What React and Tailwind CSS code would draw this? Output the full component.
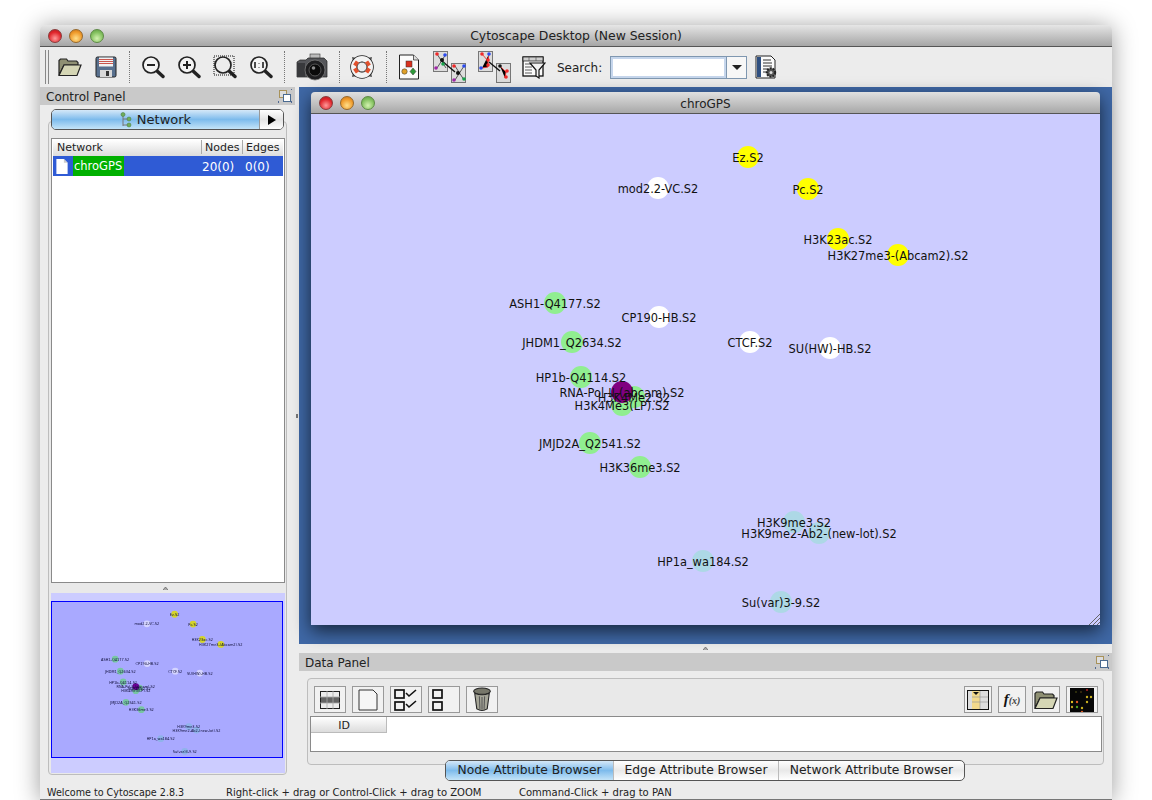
import React from 'react';

const nodes = [
  { x: 748, y: 157, c: 'bg-[#ffff00]', t: 'Ez.S2' },
  { x: 658, y: 188, c: 'bg-white', t: 'mod2.2-VC.S2' },
  { x: 808, y: 189, c: 'bg-[#ffff00]', t: 'Pc.S2' },
  { x: 838, y: 239, c: 'bg-[#ffff00]', t: 'H3K23ac.S2' },
  { x: 898, y: 255, c: 'bg-[#ffff00]', t: 'H3K27me3-(Abcam2).S2' },
  { x: 555, y: 303, c: 'bg-[#90ee90]', t: 'ASH1-Q4177.S2' },
  { x: 659, y: 317, c: 'bg-white', t: 'CP190-HB.S2' },
  { x: 572, y: 342, c: 'bg-[#90ee90]', t: 'JHDM1_Q2634.S2' },
  { x: 750, y: 342, c: 'bg-white', t: 'CTCF.S2' },
  { x: 830, y: 348, c: 'bg-white', t: 'SU(HW)-HB.S2' },
  { x: 581, y: 377, c: 'bg-[#90ee90]', t: 'HP1b-Q4114.S2' },
  { x: 634, y: 397, c: 'bg-[#90ee90]', t: 'H3K4Me2.S2' },
  { x: 622, y: 405, c: 'bg-[#90ee90]', t: 'H3K4Me3(LP).S2' },
  { x: 622, y: 392, c: 'bg-[#800080]', t: 'RNA-Pol-II-(abcam).S2' },
  { x: 590, y: 443, c: 'bg-[#90ee90]', t: 'JMJD2A_Q2541.S2' },
  { x: 640, y: 467, c: 'bg-[#90ee90]', t: 'H3K36me3.S2' },
  { x: 794, y: 522, c: 'bg-[#add8e6]', t: 'H3K9me3.S2' },
  { x: 819, y: 533, c: 'bg-[#add8e6]', t: 'H3K9me2-Ab2-(new-lot).S2' },
  { x: 703, y: 561, c: 'bg-[#add8e6]', t: 'HP1a_wa184.S2' },
  { x: 781, y: 602, c: 'bg-[#add8e6]', t: 'Su(var)3-9.S2' },
];

const Graph = () => (
  <div className="relative w-[789px] h-[511px]">
    {nodes.map((n) => (
      <div
        key={n.t}
        className={`absolute w-[22px] h-[22px] rounded-full -translate-x-1/2 -translate-y-1/2 ${n.c}`}
        style={{ left: n.x - 311, top: n.y - 114 }}
      />
    ))}
    {nodes.map((n) => (
      <div
        key={n.t + 'l'}
        className="absolute -translate-x-1/2 -translate-y-1/2 whitespace-nowrap text-[11.4px] leading-none text-[#111]"
        style={{ left: n.x - 311, top: n.y - 112 }}
      >
        {n.t}
      </div>
    ))}
  </div>
);

const Lights = () => (
  <div className="flex gap-[7px]">
    <div className="w-[14px] h-[14px] rounded-full border border-[#8a3a3a] bg-[radial-gradient(circle_at_50%_70%,#ff9a9a,#e0252b_60%,#b01a20)]" />
    <div className="w-[14px] h-[14px] rounded-full border border-[#96682a] bg-[radial-gradient(circle_at_50%_70%,#ffdf8a,#ef9a2a_60%,#c4701a)]" />
    <div className="w-[14px] h-[14px] rounded-full border border-[#5d8a45] bg-[radial-gradient(circle_at_50%_70%,#d3f2b0,#82c05e_60%,#5d9a40)]" />
  </div>
);

const Sep = ({ ml }) => <div className={`h-[32px] border-l border-dotted border-[#777] ${ml}`} />;

const Folder = ({ className }) => (
  <svg viewBox="0 0 24 20" className={className}>
    <path d="M1 18V3.5L2.5 2h6L10 4h8.5L20 5.5V8H6L1 18z" fill="#8f9073" stroke="#222" strokeWidth="1.2" />
    <path d="M1 18.5L6 8h17l-4 10.5z" fill="#d5d6b5" stroke="#222" strokeWidth="1.2" />
  </svg>
);

const Save = () => (
  <svg viewBox="0 0 22 22" className="w-[22px] h-[22px]">
    <rect x="1" y="1" width="20" height="20" rx="1.5" fill="#58708e" stroke="#222" />
    <rect x="4" y="1.5" width="14" height="9" fill="#f2f2f2" />
    <path d="M4 3.5h14M4 5.5h14M4 7.5h14" stroke="#c9564d" strokeWidth="1" />
    <rect x="5" y="14" width="12" height="7" fill="#d8d8d8" />
    <rect x="11" y="15" width="3" height="5" fill="#333" />
  </svg>
);

const Lens = ({ children, dotted }) => (
  <svg viewBox="0 0 24 24" className="w-[24px] h-[24px]">
    <path d="M15.5 15.5L22 21.5" stroke="#222" strokeWidth="3.4" strokeLinecap="round" />
    <circle cx="10" cy="10" r="8" fill={dotted ? '#ececec' : '#f4f4f4'} stroke="#222" strokeWidth="1.7" />
    {dotted && <rect x="1" y="1" width="20" height="19" fill="none" stroke="#111" strokeWidth="1" strokeDasharray="1 1" />}
    {children}
  </svg>
);

const Camera = () => (
  <svg viewBox="0 0 32 28" className="w-[32px] h-[28px]">
    <rect x="14" y="1" width="10" height="5" fill="#bbb" stroke="#333" strokeWidth=".6" />
    <path d="M1 9l3-2h6l2-2h16l3 3v16H1z" fill="#55565a" stroke="#222" strokeWidth=".7" />
    <rect x="1" y="10" width="8" height="14" fill="#38393c" />
    <circle cx="19" cy="17" r="10" fill="#1e1e20" stroke="#777" strokeWidth=".8" />
    <circle cx="19" cy="17" r="6" fill="#0a0a0a" stroke="#555" />
    <circle cx="17.5" cy="15" r="1.8" fill="#8b8b8b" />
  </svg>
);

const Life = () => (
  <svg viewBox="0 0 24 24" className="w-[24px] h-[24px]">
    <path d="M2 2l5 1-4 4zM22 2l-5 1 4 4zM2 22l1-5 4 4zM22 22l-1-5-4 4z" fill="#555" />
    <circle cx="12" cy="12" r="8.3" fill="none" stroke="#222" strokeWidth="7" />
    <circle cx="12" cy="12" r="8.3" fill="none" stroke="#f3f3f3" strokeWidth="5.4" />
    <path d="M4.5 7.5l3.8 2.6M19.5 7.5l-3.8 2.6M4.5 16.5l3.8-2.6M19.5 16.5l-3.8-2.6" stroke="#e2502c" strokeWidth="4.8" />
    <circle cx="12" cy="12" r="4.8" fill="#ececec" stroke="#333" strokeWidth=".7" />
  </svg>
);

const DocShapes = () => (
  <svg viewBox="0 0 22 26" className="w-[22px] h-[26px]">
    <path d="M1.5 1h14l5 5v19h-19z" fill="#fbfbfb" stroke="#222" />
    <path d="M15.5 1v5h5" fill="#ddd" stroke="#222" strokeWidth=".7" />
    <rect x="8" y="7" width="6" height="6" fill="#d9321f" stroke="#333" strokeWidth=".5" />
    <circle cx="6.5" cy="17.5" r="2.7" fill="#dfa028" stroke="#333" strokeWidth=".5" />
    <path d="M15 14l3 3.5-3 3.5-3-3.5z" fill="#2f9a3a" stroke="#333" strokeWidth=".5" />
  </svg>
);

const LayoutA = () => (
  <svg viewBox="0 0 34 32" className="w-[34px] h-[32px]">
    <rect x=".5" y=".5" width="14" height="20" fill="#ddd" stroke="#777" />
    <rect x="18.5" y="12.5" width="14" height="19" fill="#ddd" stroke="#777" />
    <path d="M4 3l9 14M13 3L4 17M22 15l9 14M31 15l-9 14" stroke="#333" strokeWidth=".8" />
    <path d="M9 10l13 11" stroke="#111" strokeWidth="1.4" />
    <circle cx="4" cy="3" r="1.8" fill="#f02a2a" />
    <circle cx="12" cy="4" r="1.8" fill="#2a4af0" />
    <circle cx="10" cy="13" r="1.8" fill="#16a34a" />
    <circle cx="3" cy="17" r="1.8" fill="#a028a8" />
    <circle cx="9" cy="9" r="2" fill="#111" />
    <circle cx="21" cy="15" r="1.8" fill="#f02a2a" />
    <circle cx="31" cy="15" r="1.8" fill="#2a4af0" />
    <circle cx="25" cy="22" r="2" fill="#111" />
    <circle cx="21" cy="29" r="1.8" fill="#a028a8" />
    <circle cx="31" cy="28" r="1.8" fill="#16a34a" />
  </svg>
);

const LayoutB = () => (
  <svg viewBox="0 0 34 32" className="w-[34px] h-[32px]">
    <rect x=".5" y=".5" width="14" height="20" fill="#ddd" stroke="#777" />
    <rect x="18.5" y="12.5" width="14" height="19" fill="#ddd" stroke="#777" />
    <path d="M4 3l6 7M11 3l-1 7 0 6-6 1" stroke="#e33" strokeWidth=".9" />
    <path d="M22 15l6 6-1 6" stroke="#e33" strokeWidth=".9" />
    <path d="M11 11l11 9" stroke="#111" strokeWidth="1.4" />
    <circle cx="4" cy="3" r="1.8" fill="#f02a2a" />
    <circle cx="11" cy="3" r="1.8" fill="#2a4af0" />
    <circle cx="10" cy="9" r="1.8" fill="#f02a2a" />
    <circle cx="10" cy="14" r="1.8" fill="#f02a2a" />
    <circle cx="3" cy="17" r="1.8" fill="#2a4af0" />
    <circle cx="22" cy="15" r="1.8" fill="#111" />
    <circle cx="29" cy="20" r="1.8" fill="#f02a2a" />
    <circle cx="28" cy="26" r="1.8" fill="#f02a2a" />
  </svg>
);

const FilterIcon = () => (
  <svg viewBox="0 0 24 24" className="w-[24px] h-[24px]">
    <rect x="1" y="2" width="20" height="19" fill="#fbfbfb" stroke="#111" strokeWidth="1.3" />
    <rect x="1" y="2" width="20" height="4" fill="#cfcfcf" stroke="#111" strokeWidth=".7" />
    <path d="M7 2v4M14 2v4" stroke="#555" strokeWidth=".7" />
    <path d="M3 9h7M3 12h7M3 15h7M3 18h7" stroke="#333" strokeWidth=".8" />
    <path d="M8 8h15l-6 7v8l-3-2v-6z" fill="#f2f2f2" stroke="#111" strokeWidth="1.2" />
  </svg>
);

const GearDoc = () => (
  <svg viewBox="0 0 22 24" className="w-[22px] h-[24px]">
    <path d="M1 1h15l4 4v18H1z" fill="#fbfbfb" stroke="#222" />
    <rect x="2" y="2" width="4" height="20" fill="#2f4f80" />
    <path d="M8 5h8M8 8h9M8 11h9M8 14h5M8 17h4" stroke="#333" strokeWidth="1" />
    <circle cx="16" cy="17.5" r="4.2" fill="#555" stroke="#222" strokeWidth="2" strokeDasharray="2 1" />
    <circle cx="16" cy="17.5" r="1.5" fill="#ddd" />
  </svg>
);

const TreeIcon = () => (
  <svg viewBox="0 0 12 16" className="w-[12px] h-[16px]">
    <path d="M3 2v12M3 7h6M3 13h6" stroke="#777" strokeWidth="1" />
    <circle cx="3" cy="2.5" r="2" fill="#6fae5a" stroke="#44763a" strokeWidth=".5" />
    <circle cx="9" cy="7" r="2" fill="#6fae5a" stroke="#44763a" strokeWidth=".5" />
    <circle cx="9" cy="13" r="2" fill="#6fae5a" stroke="#44763a" strokeWidth=".5" />
  </svg>
);

const FloatIcon = () => (
  <svg viewBox="0 0 14 14" className="w-[14px] h-[14px]">
    <rect x="1.5" y="1.5" width="7" height="7" fill="#ddd" stroke="#a8925a" />
    <rect x="5.5" y="5.5" width="7" height="7" fill="#fff" stroke="#4a6a90" />
    <path d="M0 13h1M13 0h1M13 13h1" stroke="#2a4a80" strokeWidth="1.4" />
  </svg>
);

const Grabber = () => (
  <svg viewBox="0 0 5 3" className="w-[5px] h-[3px]">
    <path d="M0 3l2.5-3 2.5 3" fill="#aaa" stroke="#666" strokeWidth=".8" />
  </svg>
);

const Btn = ({ w, ml, children }) => (
  <div className={`h-[27px] ${w} ${ml} border border-[#999] bg-[#f1f1f1] flex items-center justify-center shrink-0`}>
    {children}
  </div>
);

const Checks = ({ two }) => (
  <svg viewBox="0 0 24 22" className="w-[24px] h-[22px]">
    <rect x="1" y="1" width="9" height="8" fill="none" stroke="#111" strokeWidth="1.7" />
    <rect x="1" y="13" width="9" height="8" fill="none" stroke="#111" strokeWidth="1.7" />
    {two && <path d="M12 4l3 3 7-6M12 15l3 3 7-6" fill="none" stroke="#111" strokeWidth="1.6" />}
  </svg>
);

const App = () => {
  return (
    <div className="w-[1152px] h-[800px] overflow-hidden bg-white pt-[25px] pl-[40px] font-['DejaVu_Sans',sans-serif] text-[#222]">
      <div className="w-[1072px] h-[775px] flex flex-col bg-[#ececec] rounded-t-[5px] shadow-[0_2px_24px_rgba(0,0,0,0.4)]">
        <div className="relative h-[22px] shrink-0 flex items-center pl-[8px] rounded-t-[5px] bg-linear-to-b from-[#e6e6e6] to-[#a6a6a6] border-b border-[#555]">
          <Lights />
          <div className="absolute inset-x-0 pt-px text-center text-[12.4px] leading-none">Cytoscape Desktop (New Session)</div>
        </div>

        <div className="h-[40px] shrink-0 flex items-center">
          <div className="ml-[5px] w-[4px] h-[34px] border-x border-[#888]" />
          <Folder className="ml-[9px] w-[24px] h-[20px]" />
          <div className="ml-[13px]"><Save /></div>
          <Sep ml="ml-[12px]" />
          <div className="ml-[11px]"><Lens><path d="M6 10h8" stroke="#222" strokeWidth="2" /></Lens></div>
          <div className="ml-[12px]"><Lens><path d="M6 10h8M10 6v8" stroke="#222" strokeWidth="2" /></Lens></div>
          <div className="ml-[12px]"><Lens dotted /></div>
          <div className="ml-[12px]"><Lens><path d="M6 7v6M14 7v6M10 8v.5M10 12v.5" stroke="#222" strokeWidth="1.6" /></Lens></div>
          <Sep ml="ml-[11px]" />
          <div className="ml-[11px]"><Camera /></div>
          <Sep ml="ml-[11px]" />
          <div className="ml-[10px]"><Life /></div>
          <Sep ml="ml-[12px]" />
          <div className="ml-[11px]"><DocShapes /></div>
          <div className="ml-[13px]"><LayoutA /></div>
          <div className="ml-[11px]"><LayoutB /></div>
          <div className="ml-[10px]"><FilterIcon /></div>
          <div className="ml-[11px] w-[46px] pt-px text-[12px] leading-none whitespace-nowrap">Search:</div>
          <div className="ml-[7px] w-[137px] h-[23px] flex border border-[#7f97b0]">
            <div className="flex-1 bg-white border-2 border-[#c6d6ec]" />
            <div className="w-[20px] border-l border-[#7f97b0] bg-[#f7f7f7] flex items-center justify-center">
              <div className="w-0 h-0 border-x-[5px] border-x-transparent border-t-[5px] border-t-[#222]" />
            </div>
          </div>
          <div className="ml-[8px]"><GearDoc /></div>
        </div>

        <div className="h-[697px] shrink-0 flex">
          <div className="w-[255px] shrink-0 flex flex-col">
            <div className="h-[18px] bg-[#c9c9c9] flex items-center justify-between pl-[6px] pr-[3px] text-[12px] leading-none">
              <span className="pt-[2px]">Control Panel</span>
              <FloatIcon />
            </div>
            <div className="relative z-10 mt-[4px] ml-[11px] w-[233px] h-[21px] flex rounded-[5px] border border-[#555] overflow-hidden">
              <div className="flex-1 flex items-center justify-center gap-[5px] text-[13px] leading-none bg-linear-to-b from-[#d5e8f8] via-[#7dbbec] to-[#c4e4f8]">
                <TreeIcon />
                <span>Network</span>
              </div>
              <div className="w-[24px] border-l border-[#999] flex items-center justify-center bg-linear-to-b from-white via-[#e4e4e4] to-white">
                <div className="w-0 h-0 border-y-[5px] border-y-transparent border-l-[8px] border-l-black" />
              </div>
            </div>
            <div className="-mt-[9px] ml-[8px] w-[239px] h-[654px] rounded-[4px] border border-[#bdbdbd] pl-[2px] pt-[16px] bg-[#e9e9e9]">
              <div className="w-[234px] h-[445px] bg-white border border-[#8a8a8a] p-px">
                <div className="flex h-[16px] pb-[2px] text-[11px] leading-none bg-linear-to-b from-white to-[#dcdcdc]">
                  <div className="w-[148px] pl-[4px] flex items-center">Network</div>
                  <div className="w-[41px] pl-[3px] border-l border-[#aaa] flex items-center">Nodes</div>
                  <div className="w-[41px] pl-[3px] border-l border-[#aaa] flex items-center">Edges</div>
                </div>
                <div className="flex h-[20px] w-[230px] items-center text-[11.5px] leading-none text-white bg-[#2f5bd5]">
                  <svg viewBox="0 0 12 16" className="ml-[3px] w-[12px] h-[15px]">
                    <path d="M0 0h8l4 4v12H0z" fill="#fff" />
                    <path d="M8 0v4h4" fill="#ccc" />
                  </svg>
                  <div className="ml-[5px] w-[51px] h-[20px] flex items-center pl-[1px] pt-[2px] bg-[#00b000]">chroGPS</div>
                  <div className="ml-[78px] w-[43px] pt-[2px] text-[12px]">20(0)</div>
                  <div className="pt-[2px] text-[12px]">0(0)</div>
                </div>
              </div>
              <div className="h-[10px] flex items-center justify-center pr-[6px]"><Grabber /></div>
              <div className="w-[234px] h-[180px] bg-[#ccccff] pt-[8px]">
                <div className="relative w-[232px] h-[157px] overflow-hidden border border-[#0000ff] blur-[0.3px]">
                  <div className="absolute -left-[12px] -top-px origin-top-left scale-[0.308]"><Graph /></div>
                  <div className="absolute inset-0 bg-[#0000ff]/17" />
                </div>
              </div>
            </div>
          </div>

          <div className="w-[4px] shrink-0 flex items-center justify-center"><div className="w-[2px] h-[4px] bg-[#777] mb-[40px]" /></div>

          <div className="w-[813px] shrink-0 flex flex-col">
            <div className="h-[557px] pt-[5px] pl-[12px] bg-[#3f68a6]">
              <div className="w-[789px] h-[533px] flex flex-col rounded-t-[4px] shadow-[0_6px_18px_rgba(0,0,0,0.65)]">
                <div className="relative h-[22px] shrink-0 flex items-center pl-[8px] rounded-t-[4px] bg-linear-to-b from-[#e0e0e0] to-[#a8a8a8] border-b border-[#555]">
                  <Lights />
                  <div className="absolute inset-x-0 pt-[2px] text-center text-[12px] leading-none">chroGPS</div>
                </div>
                <div className="relative flex-1 bg-[#ccccff]">
                  <Graph />
                  <svg viewBox="0 0 12 12" className="absolute right-0 bottom-0 w-[12px] h-[12px]">
                    <path d="M1 12L12 1M5 12l7-7M9 12l3-3" stroke="#666" strokeWidth="1" />
                  </svg>
                </div>
              </div>
            </div>
            <div className="h-[9px] flex items-center justify-center"><Grabber /></div>
            <div className="h-[18px] bg-[#c9c9c9] flex items-center justify-between pl-[6px] pr-[3px] text-[12px] leading-none">
              <span className="pt-[2px]">Data Panel</span>
              <FloatIcon />
            </div>
            <div className="mt-[7px] ml-[8px] w-[797px] h-[87px] shrink-0 rounded-[4px] border border-[#bdbdbd] pt-[7px] bg-[#e9e9e9]">
              <div className="flex h-[27px]">
                <Btn w="w-[32px]" ml="ml-[6px]">
                  <svg viewBox="0 0 20 18" className="w-[20px] h-[18px]">
                    <rect x=".5" y=".5" width="19" height="17" fill="#eee" stroke="#222" />
                    <rect x="1" y="6" width="18" height="6" fill="#666" />
                    <path d="M7 0v18M13 0v18M0 6h20M0 12h20" stroke="#aaa" strokeWidth=".8" />
                  </svg>
                </Btn>
                <Btn w="w-[32px]" ml="ml-[6px]">
                  <svg viewBox="0 0 20 22" className="w-[20px] h-[22px]">
                    <path d="M1 1h14l4 4v16H1z" fill="#f6f6f6" stroke="#333" />
                  </svg>
                </Btn>
                <Btn w="w-[32px]" ml="ml-[6px]"><Checks two /></Btn>
                <Btn w="w-[32px]" ml="ml-[6px]"><div className="w-[24px]"><Checks /></div></Btn>
                <Btn w="w-[32px]" ml="ml-[6px]">
                  <svg viewBox="0 0 20 24" className="w-[22px] h-[25px]">
                    <ellipse cx="10" cy="4" rx="8" ry="3" fill="#77776a" stroke="#222" />
                    <path d="M3 6l2 15q5 3 10 0l2-15q-7 3-14 0z" fill="#a6a698" stroke="#222" />
                    <path d="M7.5 9l.5 12M10 9.5v12M12.5 9l-.5 12" stroke="#555" />
                  </svg>
                </Btn>
                <Btn w="w-[28px]" ml="ml-[466px]">
                  <svg viewBox="0 0 22 20" className="w-[22px] h-[20px]">
                    <rect x=".5" y=".5" width="21" height="19" fill="#ddd" stroke="#111" />
                    <rect x="5" y="1" width="8" height="18" fill="#f3d98b" />
                    <path d="M5 7h16M5 12h16M13 1v18" stroke="#999" strokeWidth=".7" />
                    <path d="M6 2h6l-3 3z" fill="#111" />
                  </svg>
                </Btn>
                <Btn w="w-[28px]" ml="ml-[6px]">
                  <span className="font-['Liberation_Serif',serif] italic font-bold text-[15px] leading-none text-[#111]">f<span className="text-[10px] text-[#444]">(x)</span></span>
                </Btn>
                <Btn w="w-[28px]" ml="ml-[6px]"><Folder className="w-[24px] h-[20px]" /></Btn>
                <Btn w="w-[32px]" ml="ml-[6px]">
                  <svg viewBox="0 0 24 24" className="w-[24px] h-[24px]">
                    <rect width="24" height="24" fill="#060606" />
                    <circle cx="6" cy="4" r="1" fill="#3a3a10" />
                    <circle cx="11" cy="4" r="1" fill="#403010" />
                    <circle cx="17" cy="2" r="1" fill="#b02020" />
                    <circle cx="17" cy="9" r="1.2" fill="#c9b020" />
                    <circle cx="21" cy="9" r="1.2" fill="#c9b020" />
                    <circle cx="2" cy="14" r="1.2" fill="#e0c020" />
                    <circle cx="7" cy="14" r="1.2" fill="#e05a20" />
                    <circle cx="17" cy="14" r="1.2" fill="#c9b020" />
                    <circle cx="2" cy="19" r="1.2" fill="#c0a020" />
                    <circle cx="7" cy="19" r="1.2" fill="#50a020" />
                    <circle cx="12" cy="20" r="1.2" fill="#c9b020" />
                    <circle cx="12" cy="24" r="1.2" fill="#e05a20" />
                  </svg>
                </Btn>
              </div>
              <div className="mt-[3px] ml-[2px] w-[792px] h-[36px] bg-white border border-[#8a8a8a]">
                <div className="w-[76px] h-[16px] flex items-center justify-center pr-[9px] pt-px text-[11px] leading-none border-r border-b border-[#bbb] bg-linear-to-b from-white to-[#dcdcdc]">ID</div>
              </div>
            </div>
            <div className="relative -mt-[5px] ml-[146px] w-[520px] h-[21px] flex rounded-[5px] border border-[#555] overflow-hidden text-[12.3px] leading-none bg-linear-to-b from-white via-[#e9e9e9] to-white">
              <div className="w-[167px] flex items-center justify-center bg-linear-to-b from-[#d5e8f8] via-[#7dbbec] to-[#c4e4f8]">Node Attribute Browser</div>
              <div className="w-[166px] flex items-center justify-center border-x border-[#bbb]">Edge Attribute Browser</div>
              <div className="flex-1 flex items-center justify-center">Network Attribute Browser</div>
            </div>
          </div>
        </div>

        <div className="h-[16px] shrink-0 flex items-center pl-[7px] pt-[3px] text-[10px] leading-none border-b border-[#777]">
          <div className="w-[179px] text-[9.6px]">Welcome to Cytoscape 2.8.3</div>
          <div className="w-[293px]">Right-click + drag or Control-Click + drag to ZOOM</div>
          <div>Command-Click + drag to PAN</div>
        </div>
      </div>
    </div>
  );
};

export default App;
